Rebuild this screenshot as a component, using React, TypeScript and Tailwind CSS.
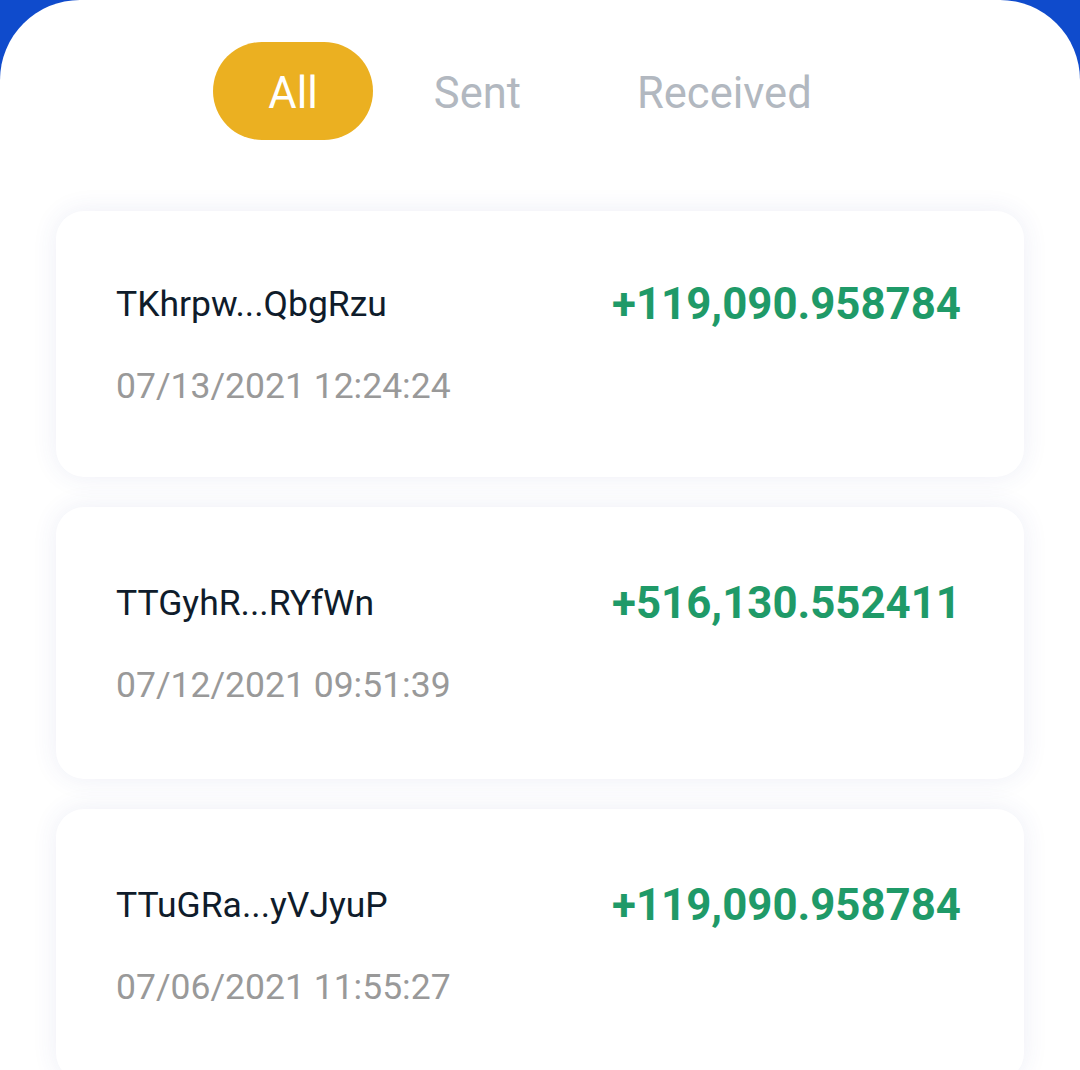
import React from "react";

const txs = [
  { addr: "TKhrpw...QbgRzu", amount: "+119,090.958784", date: "07/13/2021 12:24:24", h: "h-[266px]" },
  { addr: "TTGyhR...RYfWn", amount: "+516,130.552411", date: "07/12/2021 09:51:39", h: "h-[272px]" },
  { addr: "TTuGRa...yVJyuP", amount: "+119,090.958784", date: "07/06/2021 11:55:27", h: "h-[272px]" },
];

export default function App() {
  return (
    <div className="w-[1080px] h-[1070px] overflow-hidden bg-[#0f4bcc]" style={{ fontFamily: "Roboto, 'Noto Sans', sans-serif" }}>
      <div className="h-full bg-white rounded-t-[80px]">
        <div className="flex justify-center gap-[6px] pt-[42px]">
          <div className="h-[98px] px-[55px] pt-[5px] rounded-full bg-[#ebb021] text-white text-[43.5px] flex items-center">All</div>
          <div className="h-[98px] px-[55px] pt-[5px] rounded-full text-[#b2b8c0] text-[43.5px] flex items-center">Sent</div>
          <div className="h-[98px] px-[55px] pt-[5px] rounded-full text-[#b2b8c0] text-[43.5px] flex items-center">Received</div>
        </div>
        <div className="mt-[71px] px-[56px] flex flex-col gap-[30px]">
          {txs.map((t, i) => (
            <div key={i} className={`${t.h} shrink-0 rounded-[28px] bg-white shadow-[0_0_26px_rgba(50,70,150,0.09)] pl-[60px] pr-[63px] flex flex-col justify-center`}>
              <div className="flex items-center justify-between">
                <span className="text-[35.5px] text-[#0f1c2b] leading-none">{t.addr}</span>
                <span className="text-[43.8px] font-bold text-[#1f9a68] leading-none">{t.amount}</span>
              </div>
              <div className="mt-[42px] text-[35.5px] text-[#999999] leading-none">{t.date}</div>
            </div>
          ))}
        </div>
      </div>
    </div>
  );
}
